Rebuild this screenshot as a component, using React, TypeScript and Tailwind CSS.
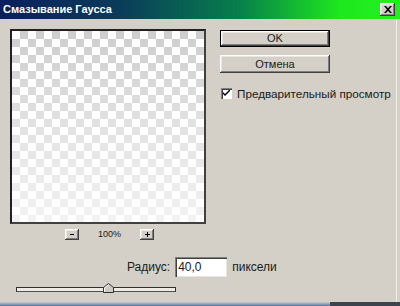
import React from 'react';

const raised = 'shadow-[inset_-1px_-1px_#404040,inset_1px_1px_#ffffff,inset_-2px_-2px_#808080,inset_2px_2px_#e8e6e0]';

function CheckMark() {
  return (
    <svg width="7" height="7" viewBox="0 0 7 7">
      <path d="M0 2 L2 4 L7 -1 L7 1 L2 6 L0 4 Z" fill="#000" />
    </svg>
  );
}

function SliderThumb() {
  return (
    <svg width="11" height="10" viewBox="0 0 11 10">
      <path d="M0.5 9.5 L0.5 4.5 L5.5 0.5 L10.5 4.5 L10.5 9.5 Z" fill="#cfcbc3" stroke="#303030" />
      <path d="M1.5 8.5 L1.5 5 L5.5 1.8" fill="none" stroke="#ffffff" />
    </svg>
  );
}

export default function App() {
  return (
    <div className="relative w-[400px] h-[306px] overflow-hidden bg-[#d4d0c8] text-[#1a1a1a] font-['Liberation_Sans',Arial,sans-serif] text-[11px]">
      {/* TITLE */}
      <div className="h-[19px] flex items-center justify-between pl-[3px] pr-[5px] bg-[linear-gradient(90deg,#0a1f5c_0%,#0a3c5a_30%,#07804a_60%,#1ee81e_85%,#22f020_100%)]">
        <span className="font-bold text-white text-[11px] leading-none">Смазывание Гаусса</span>
        <div className={`w-[15px] h-[13px] bg-[#d4d0c8] flex items-center justify-center ${raised}`}>
          <svg width="8" height="7" viewBox="0 0 8 7">
            <path d="M0 0 L2 0 L4 2.2 L6 0 L8 0 L5 3.5 L8 7 L6 7 L4 4.8 L2 7 L0 7 L3 3.5 Z" fill="#000" />
          </svg>
        </div>
      </div>

      <div className="flex pl-[10px] pt-[10px]">
        {/* PREVIEW */}
        <div className="w-[196px] flex flex-col">
          <div className="h-[195px] border-2 border-t-[#202020] border-l-[#202020] border-r-[#404040] border-b-[#404040] bg-[linear-gradient(180deg,rgba(255,255,255,0.05)_0%,rgba(255,255,255,0.45)_50%,rgba(255,255,255,0.75)_100%),conic-gradient(#cbcbcb_25%,#ffffff_0_50%,#cbcbcb_0_75%,#ffffff_0)] bg-[length:100%_100%,16px_16px]" />
          <div className="flex items-center justify-center mt-[5px] h-[11px] pl-[3px]">
            <div className={`w-[14px] h-[11px] bg-[#d4d0c8] flex items-center justify-center ${raised}`}>
              <div className="w-[4px] h-[1px] bg-black" />
            </div>
            <span className="w-[61px] text-center text-[9px] leading-none">100%</span>
            <div className={`w-[14px] h-[11px] bg-[#d4d0c8] flex items-center justify-center relative ${raised}`}>
              <div className="w-[5px] h-[1px] bg-black" />
              <div className="absolute w-[1px] h-[5px] bg-black" />
            </div>
          </div>
        </div>

        {/* BUTTONS */}
        <div className="ml-[14px] flex flex-col">
          <div className="w-[110px] h-[17px] mt-[1px] border border-black">
            <div className={`w-full h-full flex items-center justify-center ${raised}`}>OK</div>
          </div>
          <div className={`w-[110px] h-[18px] mt-[8px] flex items-center justify-center ${raised}`}>Отмена</div>
          <div className="flex items-center mt-[15px] ml-[1px]">
            <div className="w-[11px] h-[11px] bg-white flex items-center justify-center shadow-[inset_1px_1px_#808080,inset_2px_2px_#404040,inset_-1px_-1px_#ffffff]">
              <CheckMark />
            </div>
            <span className="ml-[5px] text-[11.7px] leading-none">Предварительный просмотр</span>
          </div>
        </div>
      </div>

      {/* RADIUS */}
      <div className="flex items-center mt-[17px] pl-[127px] h-[20px]">
        <span className="text-[12px]">Радиус:</span>
        <div className="ml-[5px] w-[52px] h-[20px] bg-white flex items-center pl-[3px] text-[12px] shadow-[inset_1px_1px_#808080,inset_2px_2px_#404040,inset_-1px_-1px_#e8e6e0]">40,0</div>
        <span className="ml-[5px] text-[12px]">пиксели</span>
      </div>

      {/* SLIDER */}
      <div className="relative ml-[16px] mt-[10px] w-[160px] h-[5px] bg-[#ecebe6] border border-[#303030] border-b-[#505050]">
        <div className="absolute left-[86px] -top-[5px]">
          <SliderThumb />
        </div>
      </div>

      <div className="absolute left-0 right-0 bottom-0 h-[4px] flex">
        <div className="w-[330px] bg-[linear-gradient(180deg,#c8cdd6,#5b7598)]" />
        <div className="flex-1 bg-[#3c4450]" />
      </div>
      <div className="absolute top-[19px] bottom-[4px] right-[3px] w-[1px] bg-[#f0eee8]" />
    </div>
  );
}
